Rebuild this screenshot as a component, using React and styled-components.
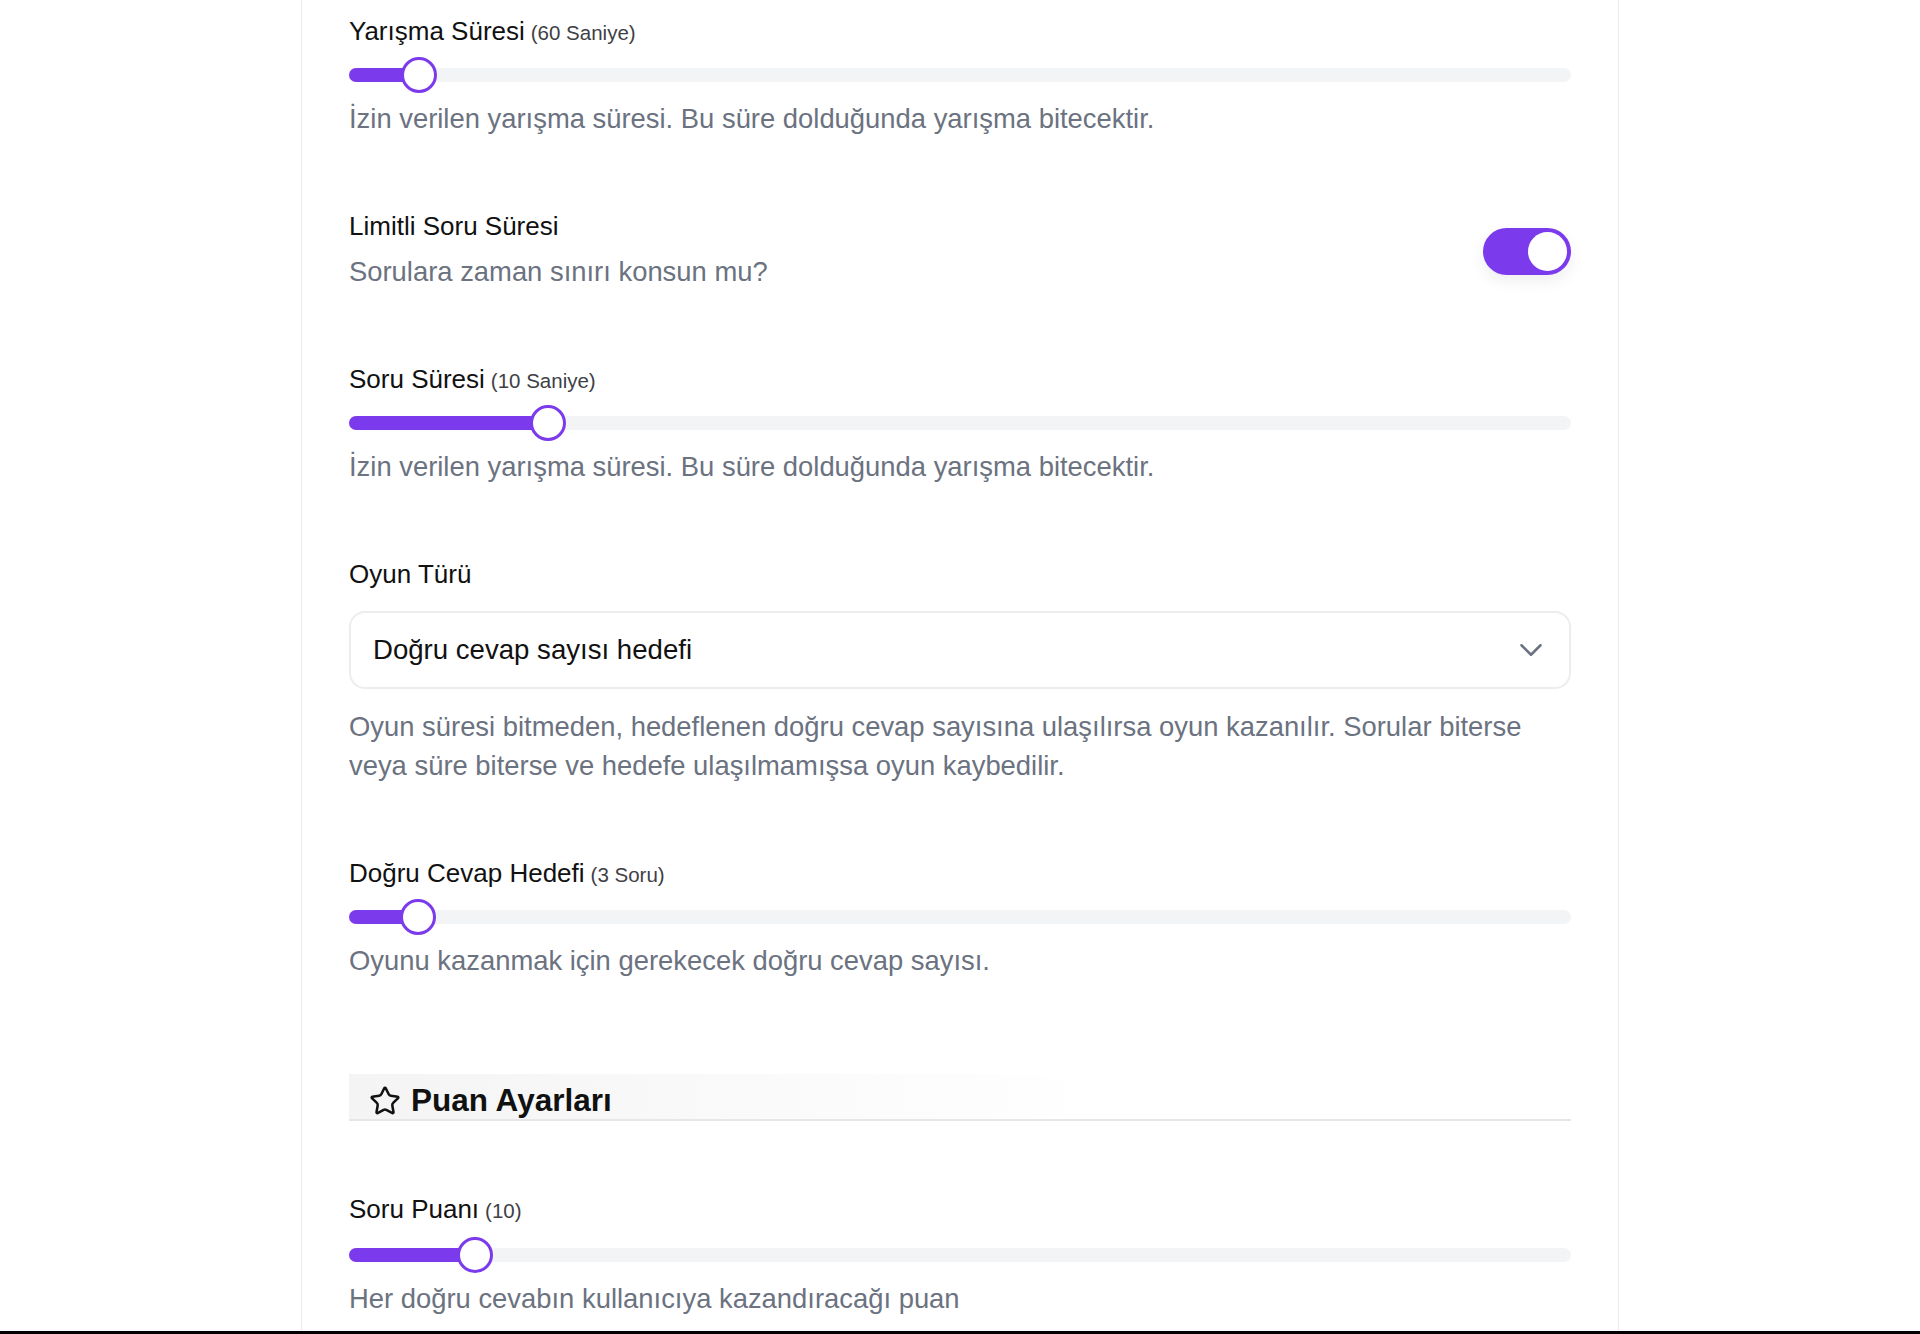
import React from 'react';
import styled, { createGlobalStyle } from 'styled-components';
import { Star, ChevronDown } from 'lucide-react';

const GlobalStyle = createGlobalStyle`
  html, body { margin: 0; padding: 0; background: #000; }
  body { font-family: "Liberation Sans", Arial, Helvetica, sans-serif; }
  * { box-sizing: border-box; }
`;

const Page = styled.div`
  height: 1331px;
  overflow: hidden;
  background: #ffffff;
`;

const Card = styled.main`
  width: 1318px;
  min-height: 100%;
  margin: 0 auto;
  padding: 15px 47px 0;
  border-left: 1px solid #ebebeb;
  border-right: 1px solid #ebebeb;
  display: flex;
  flex-direction: column;
  gap: 72px;
`;

const Field = styled.section`
  display: flex;
  flex-direction: column;
`;

const Label = styled.div`
  font-size: 26px;
  line-height: 32px;
  color: #111111;
`;

const Hint = styled.span`
  font-size: 20.5px;
  color: #3f3f46;
  margin-left: 6px;
`;

const Description = styled.p`
  margin: ${p => p.$gap ?? 6}px 0 0;
  font-size: 27.4px;
  line-height: 39px;
  color: #6b7280;
`;

const SliderRoot = styled.div`
  position: relative;
  height: 36px;
  margin-top: ${p => p.$gap ?? 8}px;
  display: flex;
  align-items: center;
`;

const Track = styled.div`
  position: relative;
  width: 100%;
  height: 14px;
  border-radius: 7px;
  background: #f3f4f6;
`;

const Fill = styled.div`
  position: absolute;
  left: 0;
  top: 0;
  bottom: 0;
  border-radius: 7px;
  background: #7c3aed;
`;

const Thumb = styled.div`
  position: absolute;
  top: 50%;
  width: 36px;
  height: 36px;
  margin: -18px 0 0 -18px;
  border-radius: 50%;
  background: #ffffff;
  border: 3.5px solid #7c3aed;
`;

const ToggleRow = styled.section`
  display: flex;
  align-items: center;
  justify-content: space-between;
`;

const TextBlock = styled.div`
  display: flex;
  flex-direction: column;
`;

const ToggleButton = styled.button`
  width: 88px;
  height: 47px;
  margin-top: 2px;
  padding: 0 4px;
  border: none;
  border-radius: 999px;
  background: ${p => (p.$on ? '#7c3aed' : '#e5e7eb')};
  display: flex;
  align-items: center;
  justify-content: ${p => (p.$on ? 'flex-end' : 'flex-start')};
  box-shadow: 0 6px 16px rgba(0, 0, 0, 0.07);
  cursor: pointer;
`;

const Knob = styled.span`
  width: 39px;
  height: 39px;
  border-radius: 50%;
  background: #ffffff;
`;

const SelectBox = styled.div`
  margin-top: 21px;
  height: 78px;
  border: 2px solid #ededed;
  border-radius: 16px;
  padding: 0 19px 0 22px;
  display: flex;
  align-items: center;
  justify-content: space-between;
  font-size: 27.6px;
  color: #111111;
  background: #ffffff;
`;

const SectionHeader = styled.header`
  margin-top: 22px;
  height: 47px;
  padding: 8px 16px 0 20px;
  display: flex;
  align-items: center;
  gap: 10px;
  background: linear-gradient(90deg, #f4f4f5 0%, #ffffff 62%);
  border-bottom: 2px solid #e5e7eb;
`;

const SectionTitle = styled.h2`
  margin: 0;
  font-size: 31.5px;
  font-weight: 700;
  color: #111111;
`;

function Slider({ percent, gap }) {
  const pos = `calc(18px + ${percent} * (100% - 36px))`;
  return (
    <SliderRoot role="slider" $gap={gap}>
      <Track>
        <Fill style={{ width: pos }} />
        <Thumb style={{ left: pos }} />
      </Track>
    </SliderRoot>
  );
}

function SliderField({ label, hint, percent, description, gap }) {
  return (
    <Field>
      <Label>
        {label}
        <Hint>{hint}</Hint>
      </Label>
      <Slider percent={percent} gap={gap} />
      <Description>{description}</Description>
    </Field>
  );
}

export default function App() {
  return (
    <>
      <GlobalStyle />
      <Page>
        <Card>
          <SliderField
            label="Yarışma Süresi"
            hint="(60 Saniye)"
            percent={0.0438}
            description="İzin verilen yarışma süresi. Bu süre dolduğunda yarışma bitecektir."
          />
          <ToggleRow>
            <TextBlock>
              <Label>Limitli Soru Süresi</Label>
              <Description $gap={10}>Sorulara zaman sınırı konsun mu?</Description>
            </TextBlock>
            <ToggleButton $on aria-pressed="true">
              <Knob />
            </ToggleButton>
          </ToggleRow>
          <SliderField
            label="Soru Süresi"
            hint="(10 Saniye)"
            percent={0.153}
            description="İzin verilen yarışma süresi. Bu süre dolduğunda yarışma bitecektir."
          />
          <Field>
            <Label>Oyun Türü</Label>
            <SelectBox role="combobox">
              <span>Doğru cevap sayısı hedefi</span>
              <ChevronDown size={38} strokeWidth={1.6} color="#6b7280" />
            </SelectBox>
            <Description $gap={18}>
              Oyun süresi bitmeden, hedeflenen doğru cevap sayısına ulaşılırsa oyun kazanılır. Sorular biterse veya süre biterse ve hedefe ulaşılmamışsa oyun kaybedilir.
            </Description>
          </Field>
          <SliderField
            label="Doğru Cevap Hedefi"
            hint="(3 Soru)"
            percent={0.0427}
            description="Oyunu kazanmak için gerekecek doğru cevap sayısı."
          />
          <SectionHeader>
            <Star size={32} strokeWidth={1.9} color="#111111" />
            <SectionTitle>Puan Ayarları</SectionTitle>
          </SectionHeader>
          <SliderField
            label="Soru Puanı"
            hint="(10)"
            percent={0.091}
            gap={10}
            description="Her doğru cevabın kullanıcıya kazandıracağı puan"
          />
        </Card>
      </Page>
    </>
  );
}
